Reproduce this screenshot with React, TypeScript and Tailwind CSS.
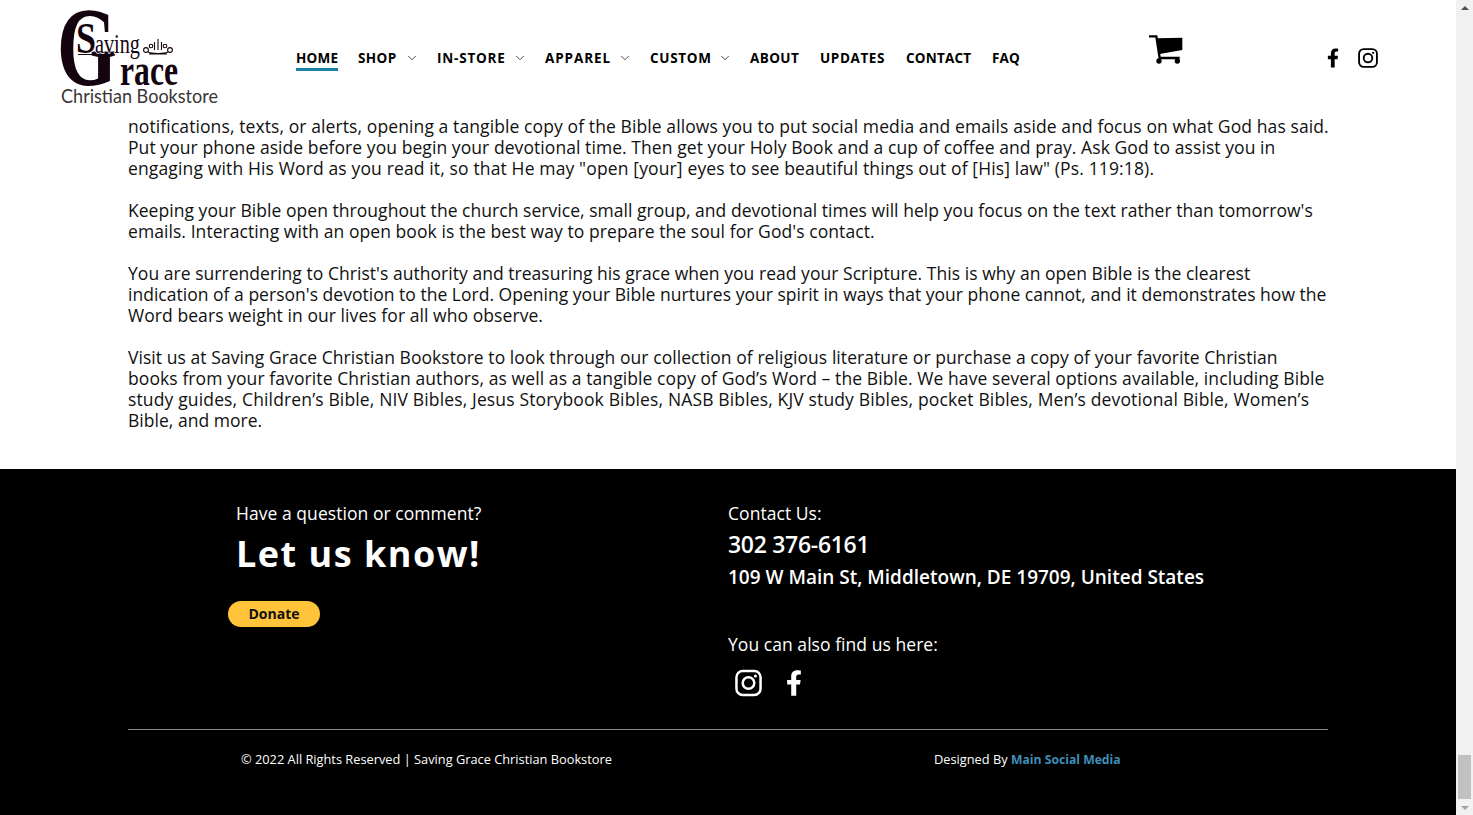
import React from 'react';
import { FaFacebookF } from 'react-icons/fa';
import { ChevronDown } from 'lucide-react';

const navItems = [
  { label: 'HOME', width: 'w-[42px]', track: 'tracking-[0.2px]', active: true },
  { label: 'SHOP', width: 'w-[59px]', track: 'tracking-[0.4px]', caret: true },
  { label: 'IN-STORE', width: 'w-[88px]', track: 'tracking-[0.8px]', caret: true },
  { label: 'APPAREL', width: 'w-[85px]', track: 'tracking-[0.9px]', caret: true },
  { label: 'CUSTOM', width: 'w-[80px]', track: 'tracking-[0.7px]', caret: true },
  { label: 'ABOUT', width: 'w-[50px]', track: 'tracking-[0.4px]' },
  { label: 'UPDATES', width: 'w-[66px]', track: 'tracking-[0.6px]' },
  { label: 'CONTACT', width: 'w-[66px]', track: 'tracking-[0.2px]' },
  { label: 'FAQ', width: 'w-[28px]', track: 'tracking-[0.2px]' },
];

const paragraphs = [
  [
    { text: 'notifications, texts, or alerts, opening a tangible copy of the Bible allows you to put social media and emails aside and focus on what God has said.', track: 'tracking-[0.1px]' },
    { text: 'Put your phone aside before you begin your devotional time. Then get your Holy Book and a cup of coffee and pray. Ask God to assist you in', track: 'tracking-[0.07px]' },
    { text: 'engaging with His Word as you read it, so that He may "open [your] eyes to see beautiful things out of [His] law" (Ps. 119:18).', track: 'tracking-[0.14px]' },
  ],
  [
    { text: "Keeping your Bible open throughout the church service, small group, and devotional times will help you focus on the text rather than tomorrow's", track: 'tracking-[0.04px]' },
    { text: "emails. Interacting with an open book is the best way to prepare the soul for God's contact.", track: 'tracking-[0.07px]' },
  ],
  [
    { text: "You are surrendering to Christ's authority and treasuring his grace when you read your Scripture. This is why an open Bible is the clearest", track: 'tracking-[0.04px]' },
    { text: "indication of a person's devotion to the Lord. Opening your Bible nurtures your spirit in ways that your phone cannot, and it demonstrates how the", track: 'tracking-[0.02px]' },
    { text: 'Word bears weight in our lives for all who observe.', track: 'tracking-[0.07px]' },
  ],
  [
    { text: 'Visit us at Saving Grace Christian Bookstore to look through our collection of religious literature or purchase a copy of your favorite Christian', track: 'tracking-[0.06px]' },
    { text: 'books from your favorite Christian authors, as well as a tangible copy of God’s Word – the Bible. We have several options available, including Bible', track: 'tracking-[0.09px]' },
    { text: 'study guides, Children’s Bible, NIV Bibles, Jesus Storybook Bibles, NASB Bibles, KJV study Bibles, pocket Bibles, Men’s devotional Bible, Women’s', track: 'tracking-[0.145px]' },
    { text: 'Bible, and more.', track: 'tracking-[0.03px]' },
  ],
];

function InstagramIcon({ className }: { className?: string }) {
  return (
    <svg viewBox="0 0 28 28" className={className} fill="none" stroke="currentColor">
      <rect x="1.5" y="1.5" width="25" height="25" rx="6.5" strokeWidth="2.6" />
      <circle cx="14" cy="14" r="6" strokeWidth="2.6" />
      <circle cx="21.2" cy="6.8" r="1.6" fill="currentColor" stroke="none" />
    </svg>
  );
}

function CartIcon({ className }: { className?: string }) {
  return (
    <svg viewBox="0 0 102 85" className={className} fill="currentColor">
      <path d="M0 3 H22 L32 68 H92" fill="none" stroke="currentColor" strokeWidth="7" />
      <path d="M24 9 L100 7 V44 L32 56 Z" />
      <circle cx="30" cy="77" r="8" />
      <circle cx="85" cy="77" r="8" />
    </svg>
  );
}

function Logo() {
  return (
    <svg viewBox="0 0 160 98" className="w-[160px] h-[98px] block overflow-visible" fill="#14040f">
      <text x="-1" y="75" fontFamily="'Liberation Serif', serif" fontWeight="700" fontSize="112" textLength="60" lengthAdjust="spacingAndGlyphs">G</text>
      <text x="18" y="43" stroke="#fff" strokeWidth="2" paintOrder="stroke" fontFamily="'Liberation Serif', serif" fontWeight="700" fontSize="44" textLength="20" lengthAdjust="spacingAndGlyphs">S</text>
      <text x="37" y="43" stroke="#fff" strokeWidth="1.5" paintOrder="stroke" fontFamily="'Liberation Serif', serif" fontSize="27" textLength="45" lengthAdjust="spacingAndGlyphs">aving</text>
      <rect x="20" y="44" width="36" height="1" />
      <text x="62" y="75" stroke="#fff" strokeWidth="1.5" paintOrder="stroke" fontFamily="'Liberation Serif', serif" fontWeight="700" fontSize="44" textLength="58" lengthAdjust="spacingAndGlyphs">race</text>
      <g fill="none" stroke="#14040f" strokeWidth="1.1">
        <circle cx="88" cy="40" r="2.4" />
        <circle cx="112" cy="40" r="2.4" />
        <circle cx="93" cy="36" r="1.8" />
        <circle cx="107" cy="36" r="1.8" />
        <path d="M90 42c4 2 16 2 20 0M100 29v11M96.500 32v8M103.500 32v8M91 44h18" />
      </g>
      <text x="3" y="93" fill="#3a3638" fontFamily="Lato, sans-serif" fontSize="20" textLength="157" lengthAdjust="spacingAndGlyphs">Christian Bookstore</text>
    </svg>
  );
}

export default function App() {
  return (
    <div className="flex h-[815px] w-full overflow-hidden bg-white text-black font-['Open_Sans',sans-serif]">
      <div className="flex-1 min-w-0 flex flex-col">
        {/* header */}
        <header className="h-[116px] flex items-start shrink-0">
          <div className="ml-[58px] mt-[10px] w-[160px] shrink-0">
            <Logo />
          </div>
          <nav className="ml-[78px] mt-[49px] flex gap-[20px] text-[13.5px] font-bold leading-[19px] shrink-0">
            {navItems.map((item) => (
              <div key={item.label} className={`${item.width} ${item.track} flex items-start whitespace-nowrap`}>
                <span className={item.active ? 'border-b-[3px] border-[#1a7fa6] w-[42px]' : ''}>{item.label}</span>
                {item.caret && <ChevronDown className="ml-auto mr-[-2px] mt-[2px] w-[14px] h-[14px] text-[#333]" strokeWidth={1.5} />}
              </div>
            ))}
          </nav>
          <CartIcon className="ml-[129px] mt-[35px] w-[34px] h-[29px] shrink-0" />
          <FaFacebookF className="ml-[144px] mt-[48px] w-[12px] h-[20px] shrink-0" />
          <InstagramIcon className="ml-[19px] mt-[48px] w-[20px] h-[20px] shrink-0" />
        </header>

        {/* article */}
        <main className="ml-[128px] w-[1200px] h-[353px] shrink-0 text-[17.5px] leading-[21px] text-[#111]">
          {paragraphs.map((lines, i) => (
            <p key={i} className="mb-[21px] whitespace-nowrap">
              {lines.map((line) => (
                <span key={line.text} className={`block ${line.track}`}>{line.text}</span>
              ))}
            </p>
          ))}
        </main>

        {/* footer */}
        <footer className="flex-1 bg-black text-white pt-[32px]">
          <div className="flex h-[228px]">
            <div className="ml-[228px] w-[500px] shrink-0">
              <p className="ml-[8px] text-[17.5px] leading-[24px] tracking-[0.05px]">Have a question or comment?</p>
              <h2 className="ml-[8px] mt-[6px] text-[36px] leading-[46px] font-bold tracking-[1.5px]">Let us know!</h2>
              <button className="mt-[24px] w-[92px] h-[26px] rounded-full bg-[#ffc439] text-[#111] text-[14px] font-bold leading-[26px] block">Donate</button>
            </div>
            <div>
              <p className="text-[17.5px] leading-[24px] tracking-[0.05px]">Contact Us:</p>
              <p className="mt-[4px] text-[23px] leading-[30px] font-semibold tracking-[-0.3px]">302 376-6161</p>
              <p className="mt-[5px] text-[19px] leading-[26px] font-semibold">109 W Main St, Middletown, DE 19709, United States</p>
              <p className="mt-[42px] text-[17.5px] leading-[24px] tracking-[0.05px]">You can also find us here:</p>
              <div className="mt-[13px] ml-[7px] flex items-center gap-[24px]">
                <InstagramIcon className="w-[27px] h-[28px]" />
                <FaFacebookF className="w-[16px] h-[28px]" />
              </div>
            </div>
          </div>
          <div className="ml-[128px] w-[1200px] border-t border-[#8a8a8a] pt-[20px] flex text-[12.8px] leading-[18px]">
            <p className="ml-[113px] w-[693px]">© 2022 All Rights Reserved | Saving Grace Christian Bookstore</p>
            <p>Designed By <span className="font-bold text-[12.2px] text-[#3f8fb8]">Main Social Media</span></p>
          </div>
        </footer>
      </div>

      {/* browser scrollbar */}
      <div className="w-[17px] shrink-0 bg-[#f1f1f1] flex flex-col items-center">
        <div className="mt-[6px] w-0 h-0 border-x-[4px] border-x-transparent border-b-[4px] border-b-[#505050]" />
        <div className="flex-1" />
        <div className="w-[13px] h-[44px] bg-[#c1c1c1]" />
        <div className="mt-[7px] mb-[5px] w-0 h-0 border-x-[4px] border-x-transparent border-t-[4px] border-t-[#a3a3a3]" />
      </div>
    </div>
  );
}
